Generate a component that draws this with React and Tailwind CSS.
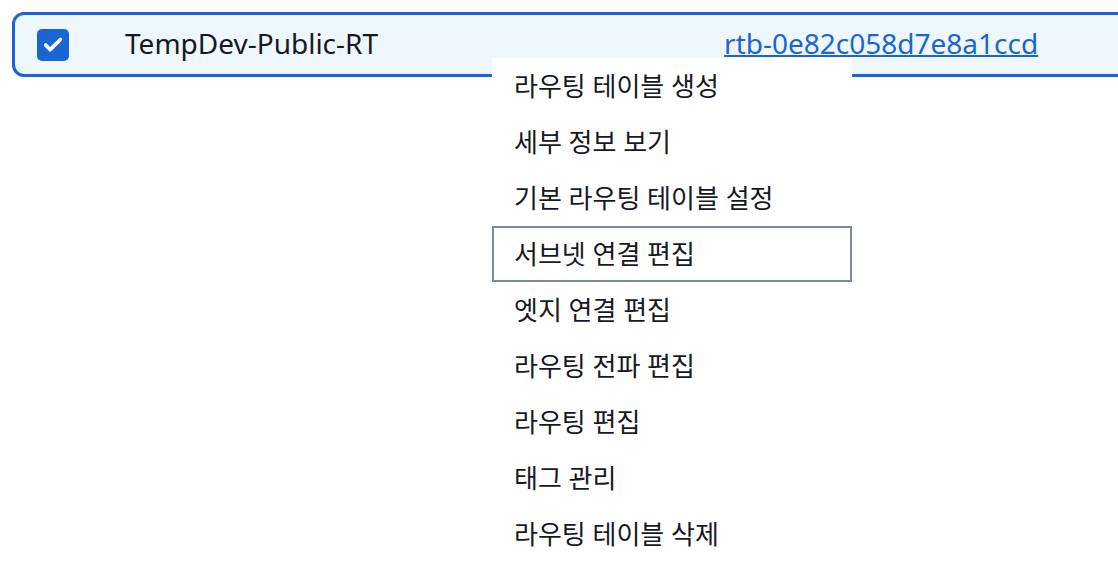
import { Check } from "lucide-react";

const menuItems = [
  "라우팅 테이블 생성",
  "세부 정보 보기",
  "기본 라우팅 테이블 설정",
  "서브넷 연결 편집",
  "엣지 연결 편집",
  "라우팅 전파 편집",
  "라우팅 편집",
  "태그 관리",
  "라우팅 테이블 삭제",
];

const App = () => {
  return (
    <div
      className="relative w-[1118px] h-[568px] overflow-hidden bg-white text-[#16191f]"
      style={{ fontFamily: '"Noto Sans", "Noto Sans CJK KR", sans-serif' }}
    >
      <div className="pt-[12px] pl-[12px]">
        <div className="flex items-center w-[1140px] h-[65px] border-[3px] border-[#1a65d4] rounded-[12px] bg-[#eef7fd]">
          <div className="ml-[22px] w-[32px] h-[32px] rounded-[5px] bg-[#1a65d4] flex items-center justify-center">
            <Check size={22} strokeWidth={4} color="white" />
          </div>
          <span className="ml-[56px] -mt-[3px] text-[28px] leading-none">TempDev-Public-RT</span>
          <a
            href="#"
            className="ml-[346px] -mt-[3px] text-[28px] leading-none text-[#1a65d4] underline underline-offset-[1px] decoration-2"
          >
            rtb-0e82c058d7e8a1ccd
          </a>
        </div>
      </div>

      <ul className="absolute left-[492px] top-[58px] w-[360px] bg-white">
        {menuItems.map((item, i) => (
          <li
            key={item}
            className={
              "h-[56px] flex items-center pl-[20px] text-[26px] " +
              (i === 3 ? "border-2 border-[#7d8998]" : "border-2 border-transparent")
            }
          >
            {item}
          </li>
        ))}
      </ul>
    </div>
  );
};

export default App;
